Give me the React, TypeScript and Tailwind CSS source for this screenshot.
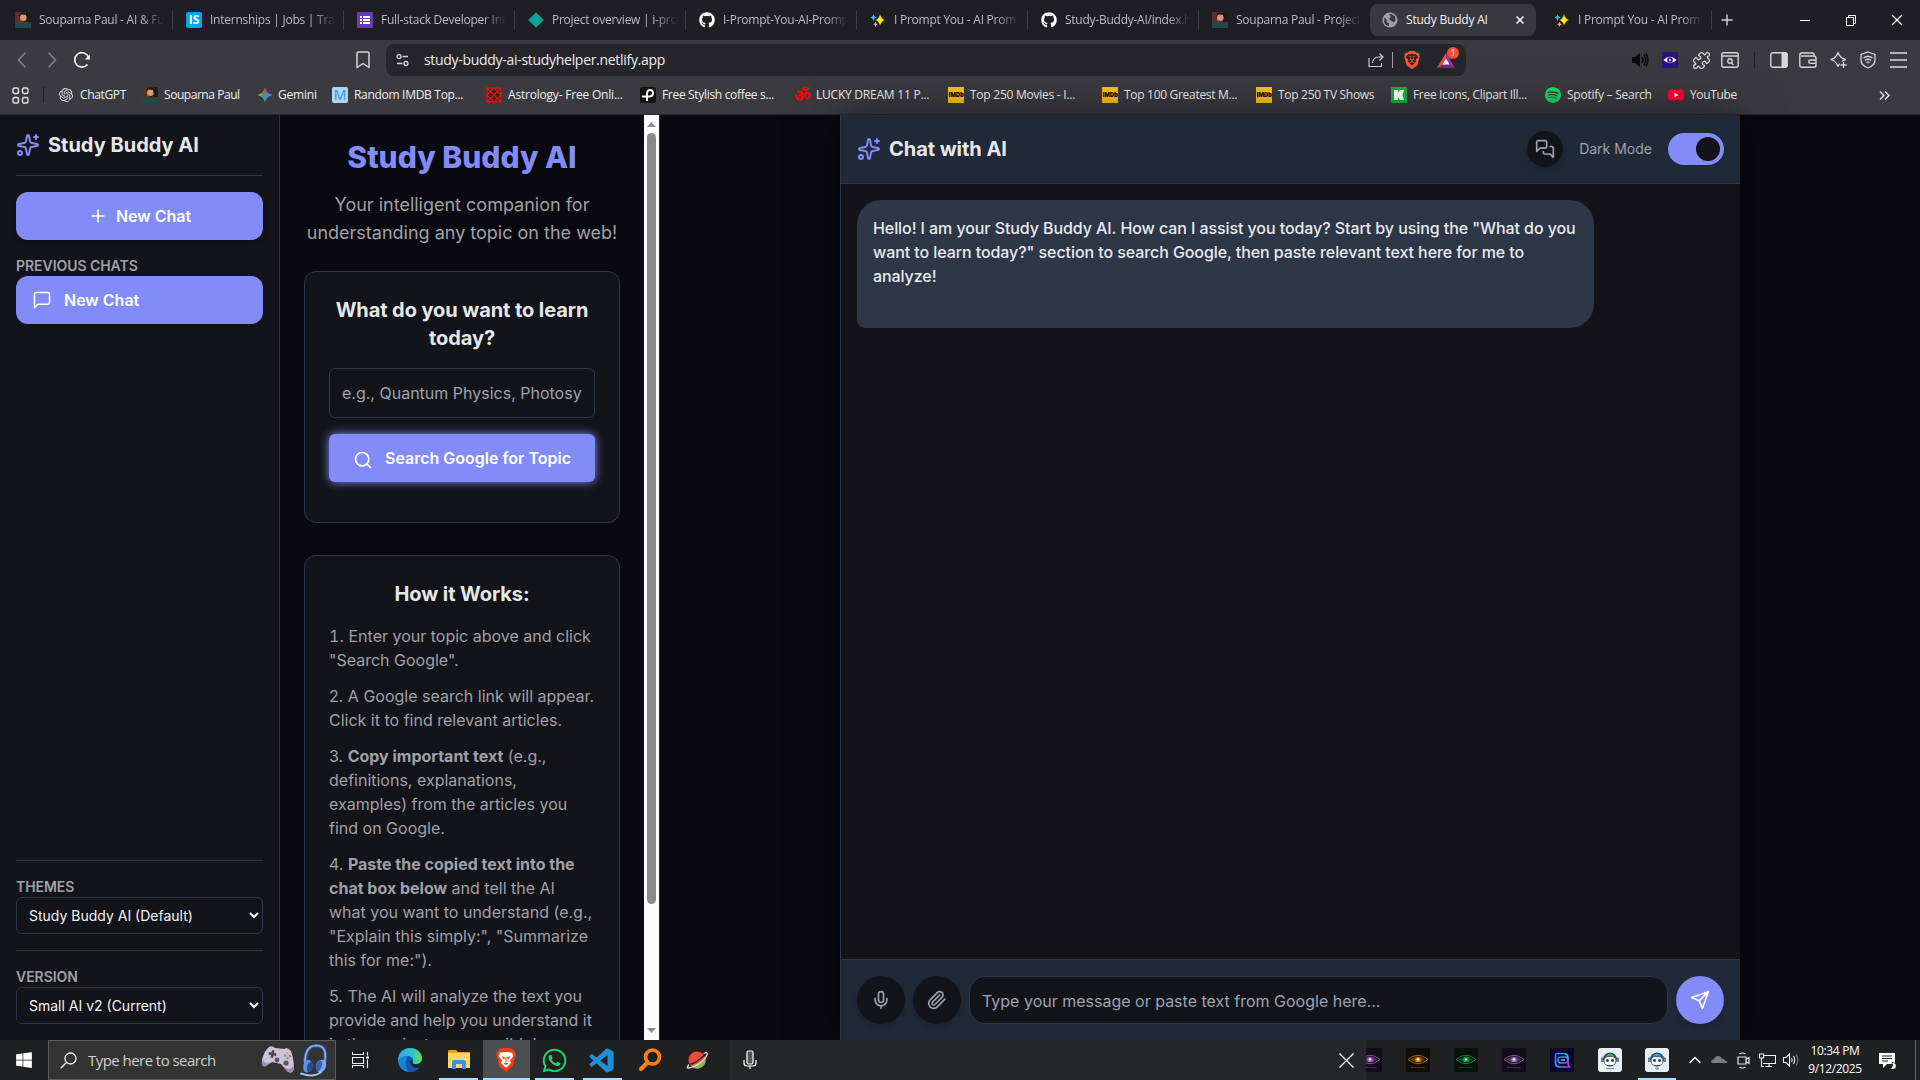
import React from "react";
import { Plus, Sparkles, Search, Puzzle, X, ChevronUp } from "lucide-react";
import { SiOpenai, SiBrave, SiSpotify } from "react-icons/si";
import { FaGithub, FaWhatsapp, FaWindows } from "react-icons/fa";
import { BiLogoVisualStudio } from "react-icons/bi";

function Stroke({ size = 20, width = 2, className = "", children }: { size?: number; width?: number; className?: string; children: React.ReactNode }) {
  return (
    <svg width={size} height={size} viewBox="0 0 24 24" fill="none" stroke="currentColor" strokeWidth={width} strokeLinecap="round" strokeLinejoin="round" className={"shrink-0 " + className}>
      {children}
    </svg>
  );
}

/* ---------- favicons ---------- */

const Portrait = () => (
  <svg width="16" height="16" viewBox="0 0 16 16" className="shrink-0">
    <rect width="16" height="16" fill="#5a3123" />
    <rect x="11" width="5" height="10" fill="#1f1a1d" />
    <ellipse cx="8.3" cy="5.8" rx="3.2" ry="4.2" fill="#d39a7d" />
    <path d="M4.5 5C4 1 6.500 .3 8.500 .4 11.500.6 12.500 2 12 5L10.800 2.800 6 2.600Z" fill="#17100f" />
    <path d="M6.300 7.500Q8.300 10.800 10.800 7.500L10.300 10H6.800Z" fill="#3b211b" />
    <path d="M0 16V12.500L5.500 10 8 11.500 11 10 16 12V16Z" fill="#1d4a4c" />
  </svg>
);
const Internshala = () => <span className="flex size-4 shrink-0 items-center justify-center rounded-[2px] bg-[#00a5ec] text-[12px] font-bold leading-none text-white">IS</span>;
const Forms = () => (
  <svg width="16" height="16" viewBox="0 0 16 16" className="shrink-0">
    <rect width="16" height="16" rx="1" fill="#673ab7" />
    <path d="M3 4h2v2H3zM6 4h7v2H6zM3 7h2v2H3zM6 7h7v2H6zM3 10h2v2H3zM6 10h7v2H6z" fill="#fff" />
  </svg>
);
const Diamond = () => (
  <svg width="16" height="16" viewBox="0 0 16 16" className="shrink-0">
    <path d="M8 .2 15.800 8 8 15.800 .2 8Z" fill="#05a39c" />
  </svg>
);
const Github = () => <FaGithub size={16} color="#fff" className="shrink-0" />;
const SparkEmoji = () => (
  <svg width="16" height="16" viewBox="0 0 16 16" className="shrink-0">
    <path d="M10 .5Q10.800 6.800 15.500 8 10.800 9.200 10 15.500 9.200 9.200 5 8 9.200 6.800 10 .5Z" fill="#ffe600" stroke="#000" strokeWidth=".5" />
    <path d="M3.500 2Q4 5 6.300 5.500 4 6 3.500 9 3 6 .6 5.500 3 5 3.500 2Z" fill="#35b8e8" />
    <path d="M5.500 9.500Q5.800 11.700 7.800 12.200 5.800 12.600 5.500 15 5.200 12.600 3.200 12.200 5.200 11.700 5.500 9.500Z" fill="#f39ab8" />
  </svg>
);
const Globe = () => (
  <svg width="16" height="16" viewBox="0 0 16 16" className="shrink-0">
    <circle cx="8" cy="8" r="7.600" fill="#9aa0a6" />
    <path d="M2.500 5.500 5 8 4.500 10 7 11.500V14Q3 13.500 2 9.500ZM7 2.500 9.500 2 13 4.500 13.500 8 12 10.500 10.500 9.500 8.500 8.500 7 6.500 9 5Z" fill="#3b3a3f" />
  </svg>
);
const Gemini = () => (
  <svg width="16" height="16" viewBox="0 0 16 16" className="shrink-0">
    <defs>
      <linearGradient id="gem" x1="0" y1="0" x2="1" y2="0">
        <stop offset="0" stopColor="#fbbc05" />
        <stop offset=".35" stopColor="#34a86b" />
        <stop offset=".55" stopColor="#4285f4" />
        <stop offset="1" stopColor="#4285f4" />
      </linearGradient>
    </defs>
    <path d="M8 .5Q9.400 6.600 15.500 8 9.400 9.400 8 15.500 6.600 9.400 .5 8 6.600 6.600 8 .5Z" fill="url(#gem)" />
    <path d="M8 .5Q8.800 4.300 10.300 5.900L8 7 5.700 5.900Q7.200 4.300 8 .5Z" fill="#ea4335" />
  </svg>
);
const MIcon = () => <span className="flex size-4 shrink-0 items-center justify-center rounded-[2px] bg-[#a9d7f5] text-[14px] leading-none text-[#3f8fd6]">M</span>;
const Astro = () => (
  <svg width="16" height="16" viewBox="0 0 16 16" className="shrink-0" fill="none" stroke="#c5221a" strokeWidth="1.400">
    <rect width="16" height="16" rx="2" fill="#4b1512" stroke="none" />
    <path d="M1 1 15 15M15 1 1 15M8 1 15 8 8 15 1 8ZM1 1H15V15H1Z" />
  </svg>
);
const PIcon = () => (
  <svg width="16" height="16" viewBox="0 0 16 16" className="shrink-0">
    <rect width="16" height="16" rx="2" fill="#141414" />
    <path d="M7 14V6.500Q7 3 10 3T13 6 10 9.500H2" fill="none" stroke="#fff" strokeWidth="1.900" />
  </svg>
);
const Om = () => <span className="flex size-4 shrink-0 items-center justify-center font-['Noto_Sans','DejaVu_Sans',sans-serif] text-[17px] font-bold leading-none text-[#f00]">ॐ</span>;
const Imdb = () => <span className="flex size-4 shrink-0 items-center justify-center bg-[#f5c518] text-[6px] font-black leading-none tracking-[-0.3px] text-black">IMDb</span>;
const Clip = () => (
  <svg width="16" height="16" viewBox="0 0 16 16" className="shrink-0">
    <rect width="16" height="16" rx="1" fill="#1faf3d" />
    <path d="M3 3H7V6L9 3H13L11.500 8 13 13H9L7 10V13H3Z" fill="#fff" />
  </svg>
);
const Youtube = () => (
  <svg width="16" height="16" viewBox="0 0 16 16" className="shrink-0">
    <rect y="2.500" width="16" height="11" rx="2.500" fill="#ff0033" />
    <path d="M6.500 5.800 10.500 8 6.500 10.200Z" fill="#fff" />
  </svg>
);

/* ---------- browser chrome ---------- */

const tabs: { icon: React.FC; title: string; active?: boolean; line?: boolean }[] = [
  { icon: Portrait, title: "Souparna Paul - AI & Fu", line: true },
  { icon: Internshala, title: "Internships | Jobs | Train", line: true },
  { icon: Forms, title: "Full-stack Developer Int", line: true },
  { icon: Diamond, title: "Project overview | i-pro", line: true },
  { icon: Github, title: "I-Prompt-You-AI-Promp", line: true },
  { icon: SparkEmoji, title: "I Prompt You - AI Prom", line: true },
  { icon: Github, title: "Study-Buddy-AI/index.h", line: true },
  { icon: Portrait, title: "Souparna Paul - Project" },
  { icon: Globe, title: "Study Buddy AI", active: true },
  { icon: SparkEmoji, title: "I Prompt You - AI Prom", line: true },
];

function TabStrip() {
  return (
    <div className="flex h-10 items-center bg-[#1f1e23] pl-[2px]">
      {tabs.map((t, i) => (
        <div key={i} className="flex h-8 w-[171px] shrink-0 items-center">
          <div className={t.active ? "flex h-8 w-[166px] items-center rounded-lg bg-[#39383e] pl-[12px]" : "flex h-8 w-[170px] items-center pl-[13px]"}>
            <t.icon />
            <span className={t.active ? "ml-2 w-[108px] whitespace-nowrap text-xs tracking-[-0.2px] text-[#f2f2f3]" : "ml-2 w-[125px] whitespace-nowrap text-xs tracking-[-0.25px] text-[#bcbbc0] [mask-image:linear-gradient(to_right,#000_82%,transparent)]"}>{t.title}</span>
            {t.active && <X size={12} strokeWidth={3.4} color="#f2f2f3" />}
          </div>
          {t.line && <span className="h-5 w-px bg-[#3d3c42]" />}
        </div>
      ))}
      <svg width="12" height="12" viewBox="0 0 12 12" stroke="#d5d5d8" strokeWidth="1.400" className="ml-[9px]">
        <path d="M6 .5V11.500M.5 6H11.500" />
      </svg>
      <svg width="10" height="10" viewBox="0 0 10 10" className="ml-[67px]">
        <path d="M0 5.500H10" stroke="#fff" />
      </svg>
      <svg width="12" height="12" viewBox="0 0 12 12" fill="none" stroke="#fff" className="ml-[35px]">
        <path d="M1.500 3.500H8.500V11.500H1.500ZM3.500 3.500V1.500H10.500V9.500H8.500" />
      </svg>
      <svg width="12" height="12" viewBox="0 0 12 12" stroke="#fff" strokeWidth="1.200" className="ml-[34px]">
        <path d="M1 1 11 11M11 1 1 11" />
      </svg>
    </div>
  );
}

function Toolbar() {
  return (
    <div className="flex h-10 items-center bg-[#3b3a3f] text-[#d6d6d9]">
      <svg width="10" height="18" viewBox="0 0 10 18" fill="none" stroke="#85848a" strokeWidth="1.500" className="ml-[17px]">
        <path d="M8.500 1.500 1.500 9 8.500 16.500" />
      </svg>
      <svg width="10" height="18" viewBox="0 0 10 18" fill="none" stroke="#85848a" strokeWidth="1.500" className="ml-5">
        <path d="M1.500 1.500 8.500 9 1.500 16.500" />
      </svg>
      <svg width="18" height="18" viewBox="0 0 18 18" fill="none" stroke="#f4f4f5" strokeWidth="1.700" className="ml-4">
        <path d="M15.500 6A7.200 7.200 0 1 0 14.500 13.500" />
        <path d="M16.800 3.500V8.500H11.800Z" fill="#f4f4f5" stroke="none" />
      </svg>
      <svg width="14" height="18" viewBox="0 0 14 18" fill="none" stroke="#d6d6d9" strokeWidth="1.500" strokeLinejoin="round" className="ml-[265px]">
        <path d="M1 2.500Q1 1 2.500 1H11.500Q13 1 13 2.500V16.500L7 12.500 1 16.500Z" />
      </svg>
      <div className="ml-[16px] flex h-8 w-[1080px] items-center rounded-lg bg-[#26252a] pl-[10px]">
        <svg width="13" height="14" viewBox="0 0 13 14" fill="none" stroke="#d6d6d9" strokeWidth="1.300">
          <circle cx="3" cy="3.500" r="2" />
          <circle cx="10" cy="10.500" r="2" />
          <path d="M6.500 3.500H12M1 10.500H6.500" />
        </svg>
        <span className="ml-[15px] w-[944px] text-sm tracking-[-0.3px] text-[#ececee]">study-buddy-ai-studyhelper.netlify.app</span>
        <svg width="16" height="16" viewBox="0 0 16 16" fill="none" stroke="#c9c9cc" strokeWidth="1.200">
          <path d="M1 6V14.500H13.500V11M4.500 11Q5 5.500 10.500 5H15M11.500 1.500 15 5 11.500 8.500" />
        </svg>
        <span className="ml-2 h-4 w-px bg-[#a09fa4]" />
        <SiBrave size={18} color="#fb542b" className="ml-[10px]" />
        <div className="relative ml-4">
          <svg width="19" height="17" viewBox="0 0 19 17">
            <path d="M9 1 0 16H18Z" fill="#9a2fae" />
            <path d="M9 1 0 16 5.500 12.500 9 6.500Z" fill="#ff4724" />
            <path d="M0 16H18L12.500 12.500H5.500Z" fill="#662d91" />
            <path d="M9 6.500 5.500 12.500H12.500Z" fill="#fff" />
          </svg>
          <span className="absolute -top-[5px] left-[10px] flex size-3 items-center justify-center rounded-full bg-[#fb4f2c] text-[9px] leading-none text-white">1</span>
        </div>
      </div>
      <svg width="17" height="16" viewBox="0 0 17 16" className="ml-[166px]" fill="none" stroke="#0b0b0b" strokeWidth="1.500">
        <path d="M0 5H3L8 1V15L3 11H0Z" fill="#0b0b0b" stroke="none" />
        <path d="M10 5Q12 8 10 11M12 3Q15.500 8 12 13M14 1.500Q18 8 14 14.500" />
      </svg>
      <svg width="16" height="16" viewBox="0 0 16 16" className="ml-[13px]">
        <rect width="16" height="16" fill="#2c1279" />
        <path d="M1.500 8Q8 1.500 14.500 8 8 14.500 1.500 8Z" fill="#fff" />
        <circle cx="8" cy="8" r="2.800" fill="#2c1279" />
        <circle cx="8" cy="8" r="1.100" fill="#fff" />
      </svg>
      <Puzzle size={19} strokeWidth={1.700} className="ml-[14px]" />
      <svg width="18" height="16" viewBox="0 0 18 16" fill="none" stroke="currentColor" strokeWidth="1.400" className="ml-[10px]">
        <path d="M.8 2.500Q.8.800 2.500.800H15.500Q17.200.800 17.200 2.500V13.500Q17.200 15.200 15.500 15.200H2.500Q.8 15.200.8 13.500ZM.8 4H17.200M10.500 11 12.500 13" />
        <circle cx="9" cy="9" r="2.200" />
      </svg>
      <span className="ml-[15px] h-4 w-px bg-[#1f1e23]" />
      <svg width="18" height="16" viewBox="0 0 18 16" className="ml-[15px]">
        <rect x=".8" y=".8" width="16.400" height="14.400" rx="2" fill="none" stroke="currentColor" strokeWidth="1.400" />
        <path d="M11.500 1H17V15H11.500Z" fill="currentColor" />
      </svg>
      <svg width="18" height="16" viewBox="0 0 18 16" fill="none" stroke="currentColor" strokeWidth="1.400" className="ml-[11px]">
        <path d="M15 4V2.500Q15 1 13.500 1H3Q.8 1 .8 3V13Q.8 15.200 3 15.200H15Q17 15.200 17 13.500V6Q17 4 15 4H2M17 8H11.500Q9.800 8 9.800 9.700T11.500 11.400H17" />
      </svg>
      <svg width="18" height="18" viewBox="0 0 18 18" fill="none" stroke="currentColor" strokeWidth="1.300" strokeLinejoin="round" className="ml-[13px]">
        <path d="M12 10.500 15.500 8.500Q10.300 7.500 8 1.500 6 7.200 1 8.500 6 10 8 15.500L9.500 12.500M13.500 11V17M10.500 14H16.500" />
      </svg>
      <svg width="16" height="18" viewBox="0 0 16 18" fill="none" stroke="currentColor" strokeWidth="1.300" className="ml-[12px]">
        <path d="M8 1 15 3.500V9Q15 14.500 8 17 1 14.500 1 9V3.500ZM3.500 7Q8 3.500 12.500 7M5 9.500Q8 7 11 9.500M6.500 11.800Q8 10.500 9.500 11.800" />
      </svg>
      <svg width="17" height="16" viewBox="0 0 17 16" stroke="#b3b2b7" strokeWidth="1.800" className="ml-[14px]">
        <path d="M0 1H17M0 8H17M0 15H17" />
      </svg>
    </div>
  );
}

const ChatGpt = () => <SiOpenai size={14} color="#d9d9dc" className="shrink-0" />;
const Spotify = () => <SiSpotify size={16} color="#1ed760" className="shrink-0" />;

const bookmarks: { icon: React.FC; label: string; cls: string }[] = [
  { icon: ChatGpt, label: "ChatGPT", cls: "w-[83px] gap-[7px] tracking-[-0.35px]" },
  { icon: Portrait, label: "Souparna Paul", cls: "w-[115px] gap-[6px] tracking-[-0.45px]" },
  { icon: Gemini, label: "Gemini", cls: "w-[75px] gap-[5px] tracking-[-0.2px]" },
  { icon: MIcon, label: "Random IMDB Top...", cls: "w-[154px] gap-[6px] tracking-[-0.3px]" },
  { icon: Astro, label: "Astrology- Free Onli...", cls: "w-[154px] gap-[6px] tracking-[-0.2px]" },
  { icon: PIcon, label: "Free Stylish coffee s...", cls: "w-[154px] gap-[6px] tracking-[-0.32px]" },
  { icon: Om, label: "LUCKY DREAM 11 P...", cls: "w-[154px] gap-[6px] tracking-[-0.23px]" },
  { icon: Imdb, label: "Top 250 Movies - I...", cls: "w-[154px] gap-[6px] tracking-[-0.25px]" },
  { icon: Imdb, label: "Top 100 Greatest M...", cls: "w-[154px] gap-[6px] tracking-[-0.3px]" },
  { icon: Imdb, label: "Top 250 TV Shows", cls: "w-[135px] gap-[6px] tracking-[-0.3px]" },
  { icon: Clip, label: "Free Icons, Clipart Ill...", cls: "w-[154px] gap-[6px] tracking-[-0.32px]" },
  { icon: Spotify, label: "Spotify – Search", cls: "w-[123px] gap-[6px] tracking-[-0.25px]" },
  { icon: Youtube, label: "YouTube", cls: "w-[211px] gap-[6px] tracking-[-0.35px]" },
];

function Bookmarks() {
  return (
    <div className="flex h-[35px] items-center border-b border-[#2b2a2f] bg-[#3b3a3f] pb-1 text-xs text-[#f0f0f1]">
      <svg width="17" height="17" viewBox="0 0 17 17" fill="none" stroke="#e4e4e6" strokeWidth="1.400" className="ml-[12px]">
        <rect x="1" y="1" width="5.500" height="5.500" rx="1.500" />
        <rect x="10.500" y="1" width="5.500" height="5.500" rx="1.500" />
        <rect x="1" y="10.500" width="5.500" height="5.500" rx="1.500" />
        <rect x="10.500" y="10.500" width="5.500" height="5.500" rx="1.500" />
      </svg>
      <span className="mr-[15px] ml-[14px] h-4 w-px bg-[#1f1e23]" />
      {bookmarks.map((b) => (
        <div key={b.label} className={"flex shrink-0 items-center whitespace-nowrap " + b.cls}>
          <b.icon />
          <span>{b.label}</span>
        </div>
      ))}
      <svg width="11" height="9" viewBox="0 0 11 9" fill="none" stroke="#e4e4e6" strokeWidth="1.400">
        <path d="M1 .5 5 4.500 1 8.500M6 .5 10 4.500 6 8.500" />
      </svg>
    </div>
  );
}

/* ---------- app ---------- */

function Sidebar() {
  return (
    <aside className="flex w-[280px] shrink-0 flex-col border-r border-[#2d3748] bg-[#131419] px-4 pb-4">
      <div className="flex h-[61px] items-center gap-2 border-b border-[#2d3748] text-xl font-bold text-[#e5e7eb]">
        <Sparkles size={24} color="#818cf8" />
        Study Buddy AI
      </div>
      <button className="mt-4 flex h-12 shrink-0 items-center justify-center gap-2 rounded-xl bg-[#818cf8] font-semibold text-white shadow-md">
        <Plus size={20} />
        New Chat
      </button>
      <div className="mt-4 text-sm font-semibold tracking-[-0.05px] text-[#a0a0a8]">PREVIOUS CHATS</div>
      <div className="flex h-12 shrink-0 items-center gap-3 rounded-xl bg-[#818cf8] px-4 font-semibold text-white">
        <Stroke width={1.8}>
          <path d="M21 15a2 2 0 0 1-2 2H7l-4 4V5a2 2 0 0 1 2-2h14a2 2 0 0 1 2 2z" />
        </Stroke>
        New Chat
      </div>
      <div className="mt-auto border-t border-[#2d3748] pt-4">
        <div className="text-sm font-semibold tracking-[-0.05px] text-[#a0a0a8]">THEMES</div>
        <select className="block h-[37px] w-full rounded-md border border-[#2d3748] bg-[#131419] px-2 text-sm text-[#f3f4f6]">
          <option>Study Buddy AI (Default)</option>
        </select>
      </div>
      <div className="mt-4 border-t border-[#2d3748] pt-4">
        <div className="text-sm font-semibold tracking-[-0.05px] text-[#a0a0a8]">VERSION</div>
        <select className="block h-[37px] w-full rounded-md border border-[#2d3748] bg-[#131419] px-2 text-sm text-[#f3f4f6]">
          <option>Small AI v2 (Current)</option>
        </select>
      </div>
    </aside>
  );
}

function Intro() {
  return (
    <section className="flex w-[380px] shrink-0 border-r border-[#242a3a] bg-[#09090f]">
      <div className="w-[364px] overflow-hidden p-6">
        <h1 className="text-center text-3xl font-extrabold text-[#818cf8]">Study Buddy AI</h1>
        <p className="mt-4 text-center text-lg leading-7 whitespace-nowrap text-[#a0a0a8]">
          Your intelligent companion for
          <br />
          understanding any topic on the web!
        </p>
        <div className="mt-6 h-[252px] rounded-xl border border-[#2d3748] bg-[#131419] p-6">
          <h2 className="text-center text-xl font-bold tracking-[-0.08px] text-[#e5e7eb]">
            What do you want to learn today?
          </h2>
          <div className="mt-4 flex h-[50px] items-center overflow-hidden rounded-md border border-[#2d3748] px-3 whitespace-nowrap text-[#9ca3af]">
            <span>e.g., Quantum Physics, Photosy</span>
          </div>
          <button className="mt-4 flex h-12 w-full items-center justify-center gap-3 rounded-md bg-[#818cf8] font-semibold text-white shadow-[0_0_10px_#818cf8]">
            <Search size={20} className="mt-[3px]" />
            Search Google for Topic
          </button>
        </div>
        <div className="mt-8 rounded-xl border border-[#2d3748] bg-[#131419] p-6">
          <h2 className="text-center text-xl font-bold tracking-[-0.08px] text-[#e5e7eb]">How it Works:</h2>
          <div className="mt-4 space-y-3 text-[#a0a0a8]">
            <p>
              <span className="tabular-nums">1</span>. Enter your topic above and click "Search Google".
            </p>
            <p>2. A Google search link will appear. Click it to find relevant articles.</p>
            <p>
              3. <strong>Copy important text</strong> (e.g., definitions, explanations, examples) from the articles you find on Google.
            </p>
            <p>
              4. <strong>Paste the copied text into the chat box below</strong> and tell the AI what you want to understand (e.g., "Explain this simply:", "Summarize this for me:").
            </p>
            <p>5. The AI will analyze the text you provide and help you understand it in the easiest way possible!</p>
          </div>
        </div>
      </div>
      <div className="flex w-[15px] flex-col items-center bg-[#fcfcfc]">
        <svg width="9" height="5" viewBox="0 0 9 5" className="mt-[7px] shrink-0">
          <path d="M4.500 0 9 5H0Z" fill="#8b8b8b" />
        </svg>
        <span className="mt-[6px] h-[771px] w-[9px] shrink-0 rounded-full bg-[#8b8b8b]" />
        <svg width="9" height="5" viewBox="0 0 9 5" className="mt-auto mb-[7px] shrink-0">
          <path d="M0 0H9L4.500 5Z" fill="#8b8b8b" />
        </svg>
      </div>
    </section>
  );
}

function Chat() {
  return (
    <main className="flex flex-1 justify-center bg-[#09090f]">
      <div className="flex w-[900px] flex-col border-l border-[#2d3748] bg-[#131318] shadow-[0_0_40px_rgba(0,0,0,0.5)]">
        <header className="flex h-[69px] items-center border-b border-[#2d3748] bg-[#1f2937] px-4">
          <Sparkles size={24} color="#818cf8" />
          <h2 className="ml-2 flex-1 text-xl font-bold tracking-[-0.05px] text-[#e5e7eb]">Chat with AI</h2>
          <span className="flex size-9 items-center justify-center rounded-full bg-[#131419] text-[#a0a0a8] shadow-md">
            <Stroke>
              <path d="M14 9a2 2 0 0 1-2 2H6l-4 4V4a2 2 0 0 1 2-2h8a2 2 0 0 1 2 2v5Z" />
              <path d="M18 9h2a2 2 0 0 1 2 2v11l-4-4h-6a2 2 0 0 1-2-2v-1" />
            </Stroke>
          </span>
          <span className="ml-4 text-sm text-[#a0a0a8]">Dark Mode</span>
          <span className="ml-4 flex h-8 w-14 items-center justify-end rounded-full bg-[#818cf8] px-1">
            <span className="size-6 rounded-full bg-[#131419]" />
          </span>
        </header>
        <div className="flex-1 p-4">
          <div className="h-32 w-[737px] rounded-3xl rounded-bl-lg bg-[#2d3748] p-4 pr-3 font-medium tracking-[-0.08px] text-[#e9eaee]">
            Hello! I am your Study Buddy AI. How can I assist you today? Start by using the "What do you
            <br />
            want to learn today?" section to search Google, then paste relevant text here for me to
            <br />
            analyze!
          </div>
        </div>
        <footer className="flex h-[81px] items-center gap-2 border-t border-[#2d3748] bg-[#1f2937] px-4 text-[#a0a0a8]">
          <span className="flex size-12 items-center justify-center rounded-full bg-[#131419] shadow-md">
            <Stroke>
              <path d="M12 2a3 3 0 0 0-3 3v7a3 3 0 0 0 6 0V5a3 3 0 0 0-3-3Z" />
              <path d="M19 10v2a7 7 0 0 1-14 0v-2M12 19v3" />
            </Stroke>
          </span>
          <span className="flex size-12 items-center justify-center rounded-full bg-[#131419] shadow-md">
            <Stroke>
              <path d="m21.440 11.050-9.190 9.190a6 6 0 0 1-8.490-8.490l8.570-8.570A4 4 0 1 1 18 8.840l-8.590 8.570a2 2 0 0 1-2.830-2.830l8.490-8.480" />
            </Stroke>
          </span>
          <div className="flex h-12 flex-1 items-center rounded-2xl border border-[#2d3748] bg-[#131419] px-3 pt-0.5 text-[#9ca3af]">
            Type your message or paste text from Google here...
          </div>
          <span className="flex size-12 items-center justify-center rounded-full bg-[#818cf8] text-white shadow-md">
            <Stroke>
              <path d="m22 2-7 20-4-9-9-4ZM22 2 11 13" />
            </Stroke>
          </span>
        </footer>
      </div>
    </main>
  );
}

/* ---------- taskbar ---------- */

function Gamepad() {
  return (
    <svg width="34" height="30" viewBox="0 0 34 30" className="shrink-0">
      <path d="M8 2Q11 0 14 3L23 4Q27 2 30 6 33 14 33 24 31 30 26 26L20 19 11 17 5 21Q0 23 1 15 3 6 8 2Z" fill="#cdc3d8" />
      <path d="M1 15Q0 23 5 21L9 17Q4 20 1 15ZM33 24Q31 30 26 26L23 22Q29 27 33 20Z" fill="#9d8cae" />
      <path d="M11 5 13.500 5.500 13 8 15.500 8.500 15 11 12.500 10.500 12 13 9.500 12.500 10 10 7.500 9.500 8 7 10.500 7.500Z" fill="#4c4657" />
      <circle cx="16" cy="15" r="2.400" fill="#5b5468" />
      <circle cx="25" cy="18" r="2.600" fill="#5b5468" />
      <circle cx="26.500" cy="8" r="1.300" fill="#f0a04b" />
      <circle cx="24" cy="10.500" r="1.300" fill="#4aa3e8" />
      <circle cx="29" cy="11" r="1.300" fill="#e56a6a" />
      <circle cx="26.500" cy="13" r="1.300" fill="#58b66c" />
    </svg>
  );
}
function Headphones() {
  return (
    <svg width="30" height="34" viewBox="0 0 30 34" className="shrink-0" fill="none">
      <path d="M6 20Q6 3 17 2.500 30 2.500 25 22" stroke="#35589f" strokeWidth="3.600" />
      <path d="M6 20Q6 3 17 2.500 30 2.500 25 22" stroke="#88b2f0" strokeWidth="1.600" />
      <ellipse cx="8.500" cy="23" rx="4.500" ry="6.500" transform="rotate(15 8 24)" fill="#5f92e2" />
      <ellipse cx="11" cy="23.500" rx="3" ry="5.500" transform="rotate(15 10 24)" fill="#2a4f9a" />
      <ellipse cx="22" cy="23" rx="5" ry="6.500" transform="rotate(20 22 23)" fill="#7aa8ec" />
      <ellipse cx="20" cy="23" rx="2.800" ry="5.500" transform="rotate(20 20.500 23)" fill="#3563b4" />
      <path d="M22 29Q15 35 2 30.500" stroke="#9fc2f2" strokeWidth="2" strokeLinecap="round" />
    </svg>
  );
}
function Edge() {
  return (
    <svg width="24" height="24" viewBox="0 0 24 24">
      <defs>
        <linearGradient id="edge" x1="0" y1="0.300" x2="1" y2=".3">
          <stop offset="0" stopColor="#2fa4e7" />
          <stop offset=".6" stopColor="#35c1c9" />
          <stop offset="1" stopColor="#5fdf55" />
        </linearGradient>
      </defs>
      <circle cx="12" cy="12" r="12" fill="#0c59a4" />
      <path d="M0 12C0 5 5 0 12 0S24 5 24 10C24 14 21 16 18 16 14 16 14 14.500 15 13.500 16 11 13.500 8 10 8 5 8 1 11 0 14Z" fill="url(#edge)" />
      <path d="M10 8C5 8 1 11 .2 14 1 20 6 24 12 24 7 21 6 14 10 8Z" fill="#1b83d6" />
      <path d="M15 13.500C14 15 14.500 16.300 18 16.300 20.500 16.300 22.500 15 23.500 13L24 18 21 20C15 21.500 11.500 17 12.500 12Z" fill="#1f2426" />
      <path d="M12.500 12C11 17 15 21.500 21.500 19.500 19 23 15 24.200 11 24 7 20 8 14 12.500 12Z" fill="#1257a0" />
    </svg>
  );
}
function Folder() {
  return (
    <svg width="22" height="20" viewBox="0 0 22 20">
      <path d="M0 1Q0 0 1 0H8L10 2H22V18H0Z" fill="#e0a21b" />
      <path d="M0 3H22V18H0Z" fill="#ffd766" />
      <path d="M4 19V12Q4 10 6 10H16Q18 10 18 12V19H14V14H8V19Z" fill="#3d94dd" />
    </svg>
  );
}
function Magnifier() {
  return (
    <svg width="24" height="24" viewBox="0 0 24 24" fill="none" stroke="#ff7f0a" strokeLinecap="round">
      <circle cx="14.500" cy="9" r="7" strokeWidth="3.600" />
      <path d="M9.500 14.500 3 21" strokeWidth="4.200" />
    </svg>
  );
}
function Planet() {
  return (
    <svg width="22" height="20" viewBox="0 0 22 20">
      <circle cx="11" cy="10" r="8.500" fill="#f04a3c" />
      <path d="M19.300 8A8.500 8.500 0 0 1 5 16Q13 14 19.300 8Z" fill="#93b94d" />
      <path d="M3 14.500Q0 18.500 2.500 18 10 17 18 9.500 23 3.500 20.500 2.500L17.500 3.500" stroke="#dcdcdc" strokeWidth="1.300" fill="none" />
      <path d="M3.500 14.500Q11 13 18.500 5" stroke="#26292b" strokeWidth="1.400" fill="none" />
    </svg>
  );
}

function Eye({ color, glow, half }: { color: string; glow: string; half?: boolean }) {
  return (
    <svg width={half ? 16 : 24} height="24" viewBox={half ? "8 0 16 24" : "0 0 24 24"} className="shrink-0">
      <rect width="24" height="24" fill={glow} />
      <path d="M2 11.500Q12 3 22 11.500 12 20 2 11.500Z" fill="none" stroke={color} strokeWidth=".9" opacity=".8" />
      <path d="M5 11.500Q12 5.500 19 11.500 12 17.500 5 11.500Z" fill={color} opacity=".45" />
      <circle cx="12" cy="11.500" r="2.600" fill={color} />
      <circle cx="12" cy="11.500" r="1.100" fill="#fff" />
      <path d="M5 19.500H19" stroke={color} opacity=".4" strokeDasharray="2 .7" />
    </svg>
  );
}
function Robot({ color, foot }: { color: string; foot?: boolean }) {
  return (
    <svg width="24" height="24" viewBox="0 0 24 24" className="shrink-0">
      <rect width="24" height="24" rx="3" fill="#e8f0f5" />
      <circle cx="12" cy="11.500" r="7" fill="#34465c" />
      <path d="M7.500 8.500Q12 2.500 16.500 8.500Z" fill={color} />
      <rect x="6.500" y="9" width="11" height="8" rx="3.500" fill="#f4f8fa" />
      <circle cx="9.500" cy="12.500" r="1.400" fill="#27384d" />
      <circle cx="14.500" cy="12.500" r="1.400" fill="#27384d" />
      <path d="M4 9.500V14M20 9.500V14" stroke="#50647a" strokeWidth="1.600" />
      <path d={foot ? "M10 20.500H14M12 19V22" : "M8 20.500H16"} stroke="#7d92a5" strokeWidth="1.200" />
    </svg>
  );
}

function Taskbar() {
  return (
    <div className="flex h-10 items-center bg-[#1e2022] font-['Open_Sans','Noto_Sans',sans-serif] text-white">
      <FaWindows size={18} className="ml-[15px]" />
      <div className="ml-[15px] flex h-10 w-[288px] items-center border border-[#5c5c5c] bg-[#333333] pl-[11px]">
        <svg width="17" height="17" viewBox="0 0 17 17" fill="none" stroke="#f2f2f2" strokeWidth="1.300">
          <circle cx="10.500" cy="6.500" r="5.500" />
          <path d="M6.500 10.500 .7 16.300" />
        </svg>
        <span className="ml-[11px] w-[173px] text-[15px] tracking-[-0.55px] whitespace-nowrap text-[#d0d0d0]">Type here to search</span>
        <Gamepad />
        <span className="w-[4px]" />
        <Headphones />
      </div>
      <svg width="17" height="16" viewBox="0 0 17 16" fill="none" stroke="#f2f2f2" strokeWidth="1.100" className="ml-4">
        <path d="M.5 0V2.500H11.500V0M.5 5.500H11.500V11.500H.5ZM.5 16V13.500H11.500V16M15.500 0V3.500M15.500 7.500V16" />
        <path d="M14 4.500H17V6.500H14Z" fill="#fff" stroke="none" />
      </svg>
      <div className="ml-[17px] flex h-10 items-center">
        <span className="flex w-[48px] justify-center"><Edge /></span>
        <span className="ml-[5px] flex h-10 w-[39px] items-center justify-center border-b-2 border-[#a6e3fb] pt-0.5"><Folder /></span>
        <span className="ml-[5px] flex h-10 w-[47px] items-center justify-center border-b-2 border-[#a6e3fb] bg-[#4b4f52] pt-0.5 pr-px">
          <svg width="22" height="24" viewBox="0 0 22 24">
            <path d="M11 0 17 .5 19.500 3 21 6 17.500 18.500 11 24 4.500 18.500 1 6 2.500 3 5 .5Z" fill="#fb3c12" />
            <path d="M11 4 17 4.500 18.500 8 15 12.500 16 15 11 20 6 15 7 12.500 3.500 8 5 4.500Z" fill="#fff" />
            <path d="M6.500 8 10 9.500 9 12ZM15.500 8 12 9.500 13 12ZM8.500 15.500 11 14.500 13.500 15.500 11 17ZM10.500 9H11.500V14H10.500Z" fill="#fb3c12" />
          </svg>
        </span>
        <span className="ml-[5px] flex h-10 w-[39px] items-center justify-center border-b-2 border-[#a6e3fb] pt-0.5 pr-px"><FaWhatsapp size={27} color="#25d366" /></span>
        <span className="ml-[9px] flex h-10 w-[39px] items-center justify-center border-b-2 border-[#a6e3fb] pt-0.5 pr-[2px]"><BiLogoVisualStudio size={29} color="#1f8fd8" /></span>
        <span className="ml-[16px]"><Magnifier /></span>
        <span className="ml-[24px]"><Planet /></span>
      </div>
      <div className="ml-[22px] flex h-10 w-[636px] items-center bg-[#252627] pl-[13px]">
        <svg width="14" height="20" viewBox="0 0 14 20" fill="none" stroke="#fff" strokeWidth="1.200">
          <rect x="4" y="1" width="6" height="13" rx="1.500" fill="#555" />
          <path d="M1 10V13Q1 16 4 16H10Q13 16 13 13V10M7 16V19" />
        </svg>
        <span className="h-10 flex-1" />
        <svg width="15" height="15" viewBox="0 0 15 15" stroke="#fff" strokeWidth="1.300" className="mr-[12px]">
          <path d="M.5.5 14.500 14.500M14.500.5.5 14.500" />
        </svg>
      </div>
      <Eye half color="#a66bd0" glow="#140c1b" />
      <div className="ml-6 flex items-center gap-6">
        <Eye color="#dd8a0c" glow="#120c06" />
        <Eye color="#18a84a" glow="#06120a" />
        <Eye color="#a57ac8" glow="#140c1b" />
        <svg width="24" height="24" viewBox="0 0 24 24" fill="none">
          <defs>
            <linearGradient id="neo" x1="0" y1="0" x2="1" y2="1">
              <stop offset="0" stopColor="#2a7cf0" />
              <stop offset=".5" stopColor="#37b3ff" />
              <stop offset="1" stopColor="#c02bd0" />
            </linearGradient>
          </defs>
          <rect width="24" height="24" fill="#07062b" />
          <path d="M7 5.500H14Q18 6 18 10V15Q18 17 19.500 19H9Q5.500 18.500 5.500 15V8Q5.500 5.500 7 5.500Z" stroke="url(#neo)" strokeWidth="1.600" />
          <path d="M10 9H15.500Q18 9.500 18 12T15 15H10Q8 14.500 8 12T10 9Z" stroke="url(#neo)" strokeWidth="1.500" />
          <path d="M11 12H15" stroke="#e68cff" strokeWidth="1.500" />
        </svg>
        <Robot color="#4caf30" />
      </div>
      <span className="ml-4 flex h-10 w-[38px] items-center justify-center border-b-2 border-[#a6e3fb] pt-0.5"><Robot color="#2ba0d8" foot /></span>
      <ChevronUp size={20} strokeWidth={1.6} className="ml-[9px]" />
      <svg width="17" height="10" viewBox="0 0 17 10" className="ml-[6px] shrink-0">
        <path d="M2 8Q0 8 0 6.500T2.500 4.500Q4 1 7 1 10 1 11 4 14 3.500 14.500 6 17 6.500 16 8Z" fill="#7b7c7e" />
      </svg>
      <svg width="13" height="17" viewBox="0 0 13 17" fill="none" stroke="#e8e8e8" strokeWidth="1.200" className="ml-[9px] shrink-0">
        <path d="M2.500 2Q5.500 0 8.500 2M2.500 15Q5.500 17 8.500 15M1 5H9V12H1ZM9 7.500 12 5.500V11.500L9 9.500" />
      </svg>
      <svg width="17" height="15" viewBox="0 0 17 15" fill="none" stroke="#f2f2f2" strokeWidth="1.100" className="ml-[9px] shrink-0">
        <path d="M5 2.500H16.500V10.500H4M10 10.500V13.500M6.500 13.500H13M.5 1H4.500V5H.5ZM2.500 5V13.500H5" />
      </svg>
      <svg width="17" height="14" viewBox="0 0 17 14" fill="none" stroke="#f2f2f2" strokeWidth="1.100" className="ml-[7px] shrink-0">
        <path d="M.5 4.500H3L6.500 1V13L3 9.500H.5ZM8.500 5Q9.800 7 8.500 9M10.500 3Q13 7 10.500 11" />
        <path d="M12.800 1.300Q17 7 12.800 12.700" stroke="#77787a" />
      </svg>
      <div className="ml-[7px] w-[56px] text-center text-xs leading-[18px] tracking-[-0.35px] whitespace-nowrap">
        <div>10:34 PM</div>
        <div>9/12/2025</div>
      </div>
      <svg width="17" height="17" viewBox="0 0 17 17" className="ml-[16px] shrink-0">
        <path d="M0 1H16V12H8L4 16V12H0Z" fill="#fff" />
        <path d="M3 4H13M3 6.500H13M3 9H9" stroke="#1e2022" />
        <path d="M11.500 16.500A3.500 3.500 0 1 0 13 10.500Q15 13.500 11.500 16.500Z" fill="#fff" stroke="#1e2022" strokeWidth=".8" />
      </svg>
      <span className="ml-auto mr-1 h-10 w-px bg-[#6a6b6c]" />
    </div>
  );
}

export default function App() {
  return (
    <div className="flex h-[1080px] w-[1920px] flex-col overflow-hidden bg-[#09090f]">
      <div className="font-['Open_Sans','Noto_Sans',sans-serif]">
        <TabStrip />
        <Toolbar />
        <Bookmarks />
      </div>
      <div className="flex min-h-0 flex-1 font-['Inter',sans-serif]">
        <Sidebar />
        <Intro />
        <Chat />
      </div>
      <Taskbar />
    </div>
  );
}
